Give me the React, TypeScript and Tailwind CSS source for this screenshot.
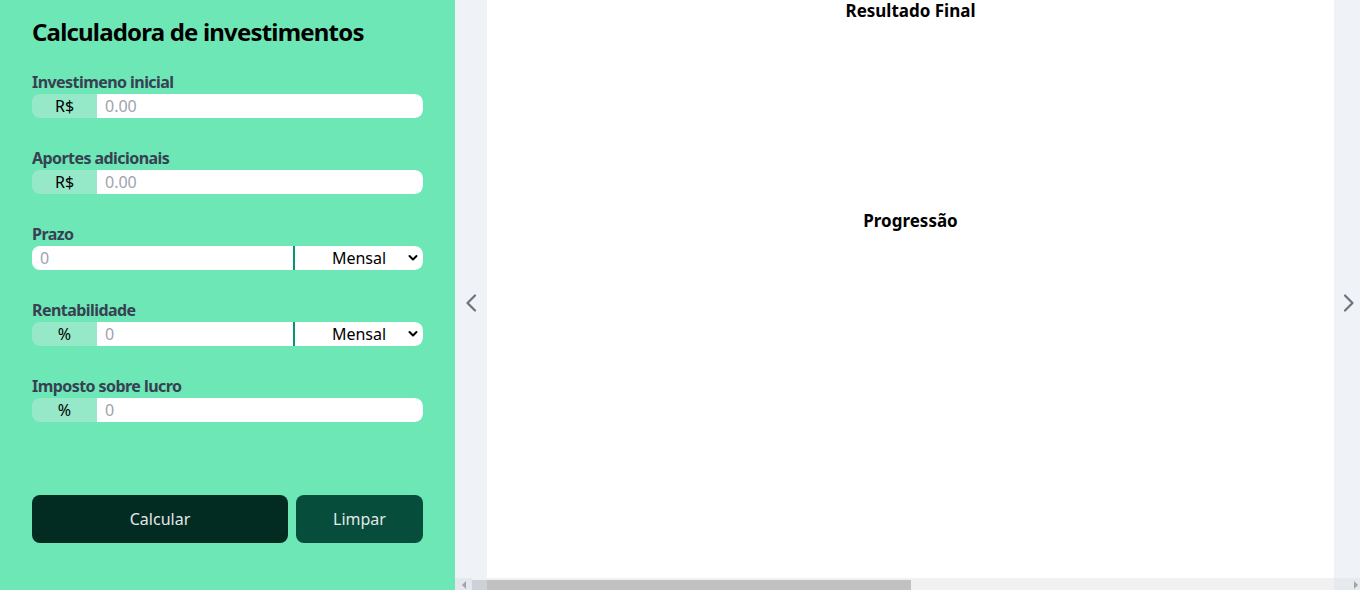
import React from 'react';

// Small chevron used by the carousel arrows
const Chevron = ({ dir }: { dir: 'left' | 'right' }) => (
  <svg width="12" height="18" viewBox="0 0 12 18" fill="none">
    <polyline
      points={dir === 'left' ? '10,1.5 2.5,9 10,16.5' : '2,1.5 9.5,9 2,16.5'}
      stroke="#6b7280"
      strokeWidth="2.2"
      strokeLinecap="round"
      strokeLinejoin="round"
    />
  </svg>
);

const SelectBox = () => (
  <div className="relative w-[130px] h-full border-l-2 border-[#059669] bg-white rounded-r-lg">
    <select className="w-full h-full appearance-none bg-transparent text-center text-base text-black outline-none">
      <option>Mensal</option>
      <option>Anual</option>
    </select>
    <svg
      className="absolute right-[5px] top-1/2 -translate-y-1/2 pointer-events-none"
      width="10"
      height="7"
      viewBox="0 0 10 7"
      fill="none"
    >
      <polyline points="1.5,1.5 5,5 8.5,1.5" stroke="#000" strokeWidth="2" strokeLinecap="round" strokeLinejoin="round" />
    </svg>
  </div>
);

const Field = ({
  label,
  prefix,
  placeholder,
  select,
}: {
  label: string;
  prefix?: string;
  placeholder: string;
  select?: boolean;
}) => (
  <div className="mb-7">
    <label className="block text-base leading-6 font-bold tracking-[-0.035em] text-[#374151]">{label}</label>
    <div className="flex h-6 rounded-lg overflow-hidden">
      {prefix && (
        <span className="w-[65px] shrink-0 flex items-center justify-center bg-[#95e9c9] text-base text-black">
          {prefix}
        </span>
      )}
      <input
        className={`flex-1 min-w-0 bg-white text-base text-black placeholder:text-[#9ca3af] outline-none px-2 ${
          select ? '' : 'rounded-r-lg'
        }`}
        placeholder={placeholder}
      />
      {select && <SelectBox />}
    </div>
  </div>
);

export default function App() {
  return (
    <div className="flex w-full h-[590px] overflow-hidden font-['Noto_Sans',sans-serif]">
      {/* Form panel */}
      <aside className="w-[455px] shrink-0 bg-[#6ee7b7] px-8 pt-4">
        <h1 className="text-2xl leading-8 font-bold tracking-[-0.034em] text-black mb-[22px]">
          Calculadora de investimentos
        </h1>
        <Field label="Investimeno inicial" prefix="R$" placeholder="0.00" />
        <Field label="Aportes adicionais" prefix="R$" placeholder="0.00" />
        <Field label="Prazo" placeholder="0" select />
        <Field label="Rentabilidade" prefix="%" placeholder="0" select />
        <Field label="Imposto sobre lucro" prefix="%" placeholder="0" />

        <div className="flex gap-2 mt-[73px]">
          <button className="w-[256px] h-12 rounded-lg bg-[#022c22] text-base text-gray-200">Calcular</button>
          <button className="flex-1 h-12 rounded-lg bg-[#064e3b] text-base text-gray-200">Limpar</button>
        </div>
      </aside>

      {/* Results carousel */}
      <main className="flex-1 flex flex-col bg-[#eff2f7]">
        <div className="flex-1 flex">
          <div className="w-8 flex items-center justify-center pt-7">
            <Chevron dir="left" />
          </div>
          <section className="w-[847px] bg-white">
            <div className="h-[209px]">
              <h2 className="text-center text-[17px] leading-[22px] font-bold text-black">Resultado Final</h2>
            </div>
            <h2 className="text-center text-[17px] leading-6 font-bold text-black">Progressão</h2>
          </section>
          <div className="flex-1 flex items-center justify-end pr-[5px] pt-7">
            <Chevron dir="right" />
          </div>
        </div>

        {/* horizontal scrollbar */}
        <div className="h-3 flex bg-[#f1f1f1]">
          <div className="w-[17px] bg-[#e4e8ee] flex items-end justify-center pb-px">
            <div className="w-0 h-0 border-y-[4px] border-y-transparent border-r-[4px] border-r-[#a3a3a3]" />
          </div>
          <div className="w-[15px] mt-0.5 bg-[#cdd2d8]" />
          <div className="w-[424px] mt-0.5 bg-[#c1c1c1]" />
          <div className="flex-1" />
          <div className="w-[26px] bg-[#e6e9ee] flex items-end justify-end pr-0.5 pb-px">
            <div className="w-0 h-0 border-y-[4px] border-y-transparent border-l-[4px] border-l-[#a3a3a3]" />
          </div>
        </div>
      </main>
    </div>
  );
}
